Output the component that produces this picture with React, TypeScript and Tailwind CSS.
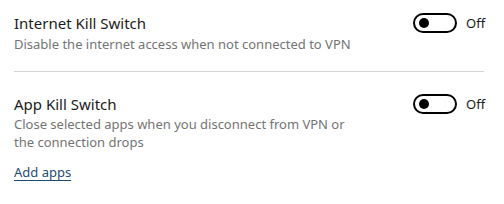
import React, { useState } from "react";

interface ToggleProps {
  on: boolean;
  onChange: (v: boolean) => void;
}

const Toggle: React.FC<ToggleProps> = ({ on, onChange }) => (
  <button
    onClick={() => onChange(!on)}
    className="flex items-center gap-[9px] shrink-0"
    aria-pressed={on}
  >
    <span
      className={`flex items-center w-[44px] h-[20px] rounded-full border-2 px-[4px] ${
        on ? "bg-[#0067c0] border-[#0067c0] justify-end" : "bg-white border-black justify-start"
      }`}
    >
      <span className={`w-[10px] h-[10px] rounded-full ${on ? "bg-white" : "bg-black"}`} />
    </span>
    <span className="w-[18px] text-left text-[13px] leading-[20px] text-[#1b1b1b]">
      {on ? "On" : "Off"}
    </span>
  </button>
);

export default function App() {
  const [internetKill, setInternetKill] = useState(false);
  const [appKill, setAppKill] = useState(false);

  return (
    <div
      className="w-[504px] h-[204px] bg-white pl-[14px] pr-[20px] pt-[13px]"
      style={{ fontFamily: '"Noto Sans", "Open Sans", sans-serif' }}
    >
      <div className="flex justify-between items-start pb-[18px] border-b border-[#d4d4d4]">
        <div>
          <div className="text-[15px] leading-[20px] text-[#1b1b1b]">Internet Kill Switch</div>
          <div className="mt-[2px] text-[13px] leading-[18px] text-[#747474]">
            Disable the internet access when not connected to VPN
          </div>
        </div>
        <Toggle on={internetKill} onChange={setInternetKill} />
      </div>

      <div className="flex justify-between items-start pt-[22px]">
        <div>
          <div className="text-[15px] leading-[20px] text-[#1b1b1b]">App Kill Switch</div>
          <div className="mt-[1px] max-w-[350px] text-[13px] leading-[18px] text-[#747474]">
            Close selected apps when you disconnect from VPN or the connection drops
          </div>
          <a
            href="#"
            className="inline-block mt-[12px] text-[13px] leading-[18px] text-[#1f4b73] underline underline-offset-[3px]"
          >
            Add apps
          </a>
        </div>
        <Toggle on={appKill} onChange={setAppKill} />
      </div>
    </div>
  );
}
